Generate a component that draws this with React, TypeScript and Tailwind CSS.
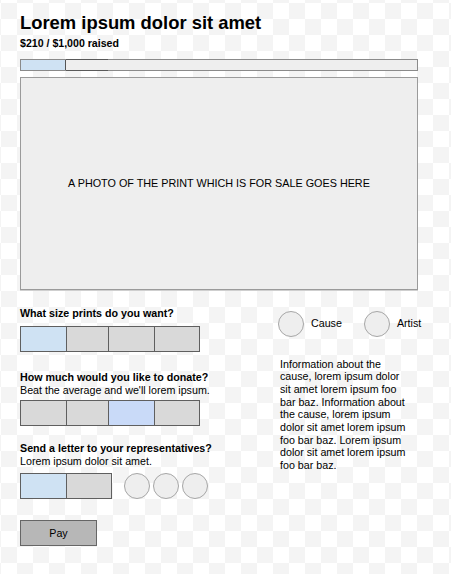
import { useState } from 'react';

const SIZES = ['S', 'M', 'L', 'XL'];
const AMOUNTS = ['$5', '$10', '$25', '$50'];

// widths of the segmented cells, incl. their left divider
const SIZE_WIDTHS = ['w-[45px]', 'w-[42px]', 'w-[46px]', 'w-[45px]'];

function Segmented({
  items,
  widths,
  selected,
  selectedClass,
  onSelect,
}: {
  items: string[];
  widths: string[];
  selected: number;
  selectedClass: string;
  onSelect: (i: number) => void;
}) {
  return (
    <div className="flex h-[26px] w-fit border border-[#5f5f5f]">
      {items.map((item, i) => (
        <button
          key={item}
          type="button"
          aria-label={item}
          onClick={() => onSelect(i)}
          className={`${widths[i]} h-full ${i > 0 ? 'border-l border-[#5f5f5f]' : ''} ${
            i === selected ? selectedClass : 'bg-[#d9d9d9]'
          }`}
        />
      ))}
    </div>
  );
}

function Circle({ label }: { label?: string }) {
  return (
    <span
      aria-label={label}
      className="block w-[26px] h-[26px] rounded-full bg-[#eeeeee] border border-[#a6a6a6] shrink-0"
    />
  );
}

export default function App() {
  const [size, setSize] = useState(0);
  const [amount, setAmount] = useState(2);
  const [letter, setLetter] = useState(0);

  return (
    <div className="min-h-screen bg-[conic-gradient(#f4f4f4_25%,#ffffff_0_50%,#f4f4f4_0_75%,#ffffff_0)] bg-[length:32px_32px] bg-[position:17px_3px] font-['Liberation_Sans',Arial,sans-serif] text-black">
      <div className="pl-[20px] pt-[12px]">
        <h1 className="text-[18.4px] leading-[21px] font-bold">Lorem ipsum dolor sit amet</h1>
        <p className="mt-[4px] text-[10.6px] leading-[12.5px] font-bold">$210 / $1,000 raised</p>

        {/* progress */}
        <div className="mt-[9px] h-[12px] w-[398px] flex border border-[#8a8a8a] bg-[#eeeeee]">
          <div className="w-[45px] h-full bg-[#cfe2f3] border-r border-[#555555]" />
          <div className="w-[42px] h-[12px] border-y border-[#5a5a5a] -my-px" />
        </div>

        {/* photo */}
        <div className="mt-[6px] h-[213px] w-[398px] flex items-center justify-center bg-[#eeeeee] border border-[#9a9a9a] shadow-[0_1px_0_#cfcfcf]">
          <span className="text-[10.8px] leading-[12.5px]">A PHOTO OF THE PRINT WHICH IS FOR SALE GOES HERE</span>
        </div>

        <div className="flex items-start">
          {/* options */}
          <div className="w-[258px] shrink-0 mt-[17px] text-[10.7px] leading-[12.5px]">
            <p className="font-bold">What size prints do you want?</p>
            <div className="mt-[7px]">
              <Segmented
                items={SIZES}
                widths={SIZE_WIDTHS}
                selected={size}
                selectedClass="bg-[#cfe2f3]"
                onSelect={setSize}
              />
            </div>

            <p className="mt-[19px] font-bold">How much would you like to donate?</p>
            <p>Beat the average and we'll lorem ipsum.</p>
            <div className="mt-[4px]">
              <Segmented
                items={AMOUNTS}
                widths={SIZE_WIDTHS}
                selected={amount}
                selectedClass="bg-[#c9daf8]"
                onSelect={setAmount}
              />
            </div>

            <p className="mt-[16px] font-bold">Send a letter to your representatives?</p>
            <p>Lorem ipsum dolor sit amet.</p>
            <div className="mt-[6px] flex items-center">
              <Segmented
                items={['Yes', 'No']}
                widths={['w-[45px]', 'w-[45px]']}
                selected={letter}
                selectedClass="bg-[#cfe2f3]"
                onSelect={setLetter}
              />
              <div className="ml-[12px] flex gap-[3px]">
                <Circle />
                <Circle />
                <Circle />
              </div>
            </div>

            <button
              type="button"
              className="mt-[21px] w-[77px] h-[26px] bg-[#b7b7b7] border border-[#666666] text-[10.7px]"
            >
              Pay
            </button>
          </div>

          {/* about */}
          <div className="shrink-0 mt-[21px] text-[10.7px]">
            <div className="flex items-center">
              <Circle label="Cause" />
              <span className="ml-[7px]">Cause</span>
              <span className="ml-[22px]">
                <Circle label="Artist" />
              </span>
              <span className="ml-[7px]">Artist</span>
            </div>
            <p className="mt-[21px] ml-[2px] w-[130px] leading-[12.7px]">
              Information about the cause, lorem ipsum dolor sit amet lorem ipsum foo bar baz. Information about the
              cause, lorem ipsum dolor sit amet lorem ipsum foo bar baz. Lorem ipsum dolor sit amet lorem ipsum foo
              bar baz.
            </p>
          </div>
        </div>
      </div>
    </div>
  );
}
